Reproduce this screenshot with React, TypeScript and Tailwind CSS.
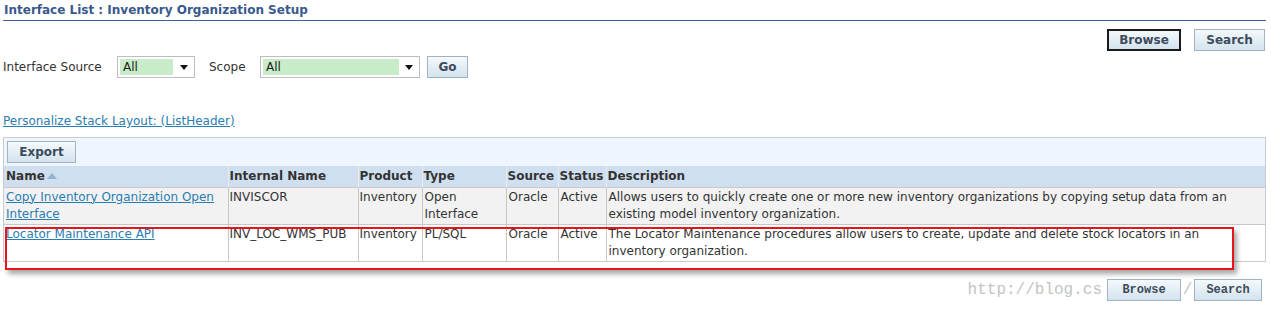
import React from 'react';

const font = { fontFamily: '"DejaVu Sans", Verdana, sans-serif' };

function Btn({ label, focused, className = '' }: { label: string; focused?: boolean; className?: string }) {
  return (
    <button
      className={`relative z-10 h-[22px] bg-gradient-to-b from-[#f4f9fc] to-[#d3e3ee] text-[12px] font-bold text-[#3d4b5c] leading-none ${
        focused ? 'border-2 border-[#1c1c1c]' : 'border border-[#9fb3c4]'
      } ${className}`}
    >
      {label}
    </button>
  );
}

function FakeSelect({ width, fill }: { width: string; fill: string }) {
  return (
    <div className={`flex h-[22px] items-center border border-[#bdbdbd] bg-white ${width}`}>
      <div className={`ml-[2px] flex h-[16px] items-center bg-[#c8ecc8] pl-[3px] text-[12px] text-[#222] ${fill}`}>All</div>
      <div className="flex flex-1 justify-center">
        <svg width="8" height="5" viewBox="0 0 8 5">
          <path d="M0 0h8L4 5z" fill="#111" />
        </svg>
      </div>
    </div>
  );
}

const rows = [
  {
    name: ['Copy Inventory Organization Open', 'Interface'],
    internal: 'INVISCOR',
    type: ['Open', 'Interface'],
    desc: [
      'Allows users to quickly create one or more new inventory organizations by copying setup data from an',
      'existing model inventory organization.',
    ],
    bg: 'bg-[#f2f2f2]',
  },
  {
    name: ['Locator Maintenance API'],
    internal: 'INV_LOC_WMS_PUB',
    type: ['PL/SQL'],
    desc: [
      'The Locator Maintenance procedures allow users to create, update and delete stock locators in an',
      'inventory organization.',
    ],
    bg: 'bg-white',
  },
];

export default function App() {
  return (
    <div className="relative h-[309px] w-[1271px] overflow-hidden bg-white text-[12px] text-[#333]" style={font}>
      {/* Title */}
      <div className="mr-[5px] ml-[3px] h-[21px] border-b border-[#3f5f96] pt-[3px] pl-[1px] text-[12px] font-bold leading-[15px] text-[#38598d]">
        Interface List : Inventory Organization Setup
      </div>

      {/* Top buttons */}
      <div className="mt-[8px] flex justify-end gap-[13px] pr-[6px]">
        <Btn label="Browse" focused className="w-[74px]" />
        <Btn label="Search" className="w-[71px]" />
      </div>

      {/* Filters */}
      <div className="mt-[5px] flex h-[22px] items-center pl-[3px]">
        <span className="w-[114px]">Interface Source</span>
        <FakeSelect width="w-[78px]" fill="w-[53px]" />
        <span className="ml-[14px] w-[51px]">Scope</span>
        <FakeSelect width="w-[160px]" fill="w-[136px]" />
        <Btn label="Go" className="ml-[7px] w-[41px]" />
      </div>

      {/* Personalize */}
      <div className="mt-[34px] h-[18px] pl-[3px] leading-[18px]">
        <a className="text-[#2a7db3] underline">Personalize Stack Layout: (ListHeader)</a>
      </div>

      {/* Table */}
      <div className="relative mt-[7px] ml-[3px] w-[1263px] border border-[#c5ccd4]">
        <div className="flex h-[28px] items-center bg-[#eef5fc] pl-[3px]">
          <Btn label="Export" className="w-[69px]" />
        </div>
        <table className="w-full table-fixed border-collapse">
          <colgroup>
            <col className="w-[224px]" />
            <col className="w-[130px]" />
            <col className="w-[64px]" />
            <col className="w-[84px]" />
            <col className="w-[52px]" />
            <col className="w-[48px]" />
            <col />
          </colgroup>
          <thead>
            <tr className="h-[21px] bg-[#cfdfef] text-left font-bold text-[#333]">
              <th className="px-[2px] font-bold">
                <span className="inline-flex items-center gap-[2px]">
                  Name
                  <svg width="10" height="6" viewBox="0 0 10 6">
                    <path d="M0 6L5 0l5 6z" fill="#8fb3d6" />
                  </svg>
                </span>
              </th>
              {['Internal Name', 'Product', 'Type', 'Source', 'Status', 'Description'].map((h) => (
                <th key={h} className="border-l border-[#e3ebf4] px-[1px] font-bold whitespace-nowrap">
                  {h}
                </th>
              ))}
            </tr>
          </thead>
          <tbody>
            {rows.map((r) => (
              <tr key={r.internal} className={`h-[37px] border-t border-[#c8c8c8] align-top leading-[17px] ${r.bg}`}>
                <td className="px-[2px] pt-[1px]">
                  <a className="text-[#2a7db3] underline">
                    {r.name.map((n, i) => (
                      <React.Fragment key={i}>
                        {i > 0 && <br />}
                        {n}
                      </React.Fragment>
                    ))}
                  </a>
                </td>
                <td className="border-l border-[#c8c8c8] px-[1px] pt-[1px] whitespace-nowrap">{r.internal}</td>
                <td className="border-l border-[#c8c8c8] px-[1px] pt-[1px]">Inventory</td>
                <td className="border-l border-[#c8c8c8] px-[2px] pt-[1px]">
                  {r.type.map((t, i) => (
                    <div key={i}>{t}</div>
                  ))}
                </td>
                <td className="border-l border-[#c8c8c8] px-[2px] pt-[1px]">Oracle</td>
                <td className="border-l border-[#c8c8c8] px-[2px] pt-[1px]">Active</td>
                <td className="border-l border-[#c8c8c8] px-[2px] pt-[1px] whitespace-nowrap">
                  {r.desc.map((d, i) => (
                    <div key={i}>{d}</div>
                  ))}
                </td>
              </tr>
            ))}
          </tbody>
        </table>
        {/* red highlight */}
        <div className="pointer-events-none absolute top-[89px] left-[1px] h-[43px] w-[1229px] border-2 border-[#e8141c] shadow-[3px_4px_5px_rgba(0,0,0,0.35)]" />
      </div>

      {/* Bottom buttons, watermark peeks out between them */}
      <div
        className="relative mt-[17px] flex items-center justify-end pr-[9px] text-[16px] leading-[22px] text-[#c4c4c4]"
        style={{ fontFamily: '"Liberation Mono", monospace' }}
      >
        <span className="mr-[5px]">http://blog.cs</span>
        <Btn label="Browse" className="w-[74px]" />
        <span className="w-[13px] text-center">/</span>
        <Btn label="Search" className="w-[68px]" />
      </div>
    </div>
  );
}
